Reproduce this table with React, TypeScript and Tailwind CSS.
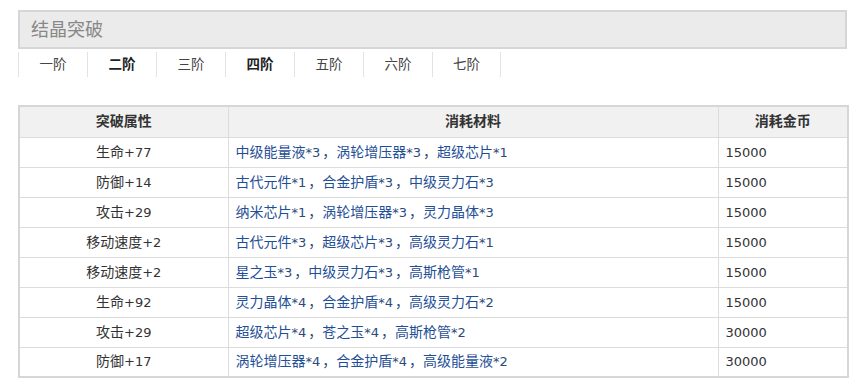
const tabs = [
  { label: "一阶", bold: false },
  { label: "二阶", bold: true },
  { label: "三阶", bold: false },
  { label: "四阶", bold: true },
  { label: "五阶", bold: false },
  { label: "六阶", bold: false },
  { label: "七阶", bold: false },
];

type Item = [string, number];

const rows: Array<{ attr: string; items: Item[]; gold: string }> = [
  { attr: "生命+77", items: [["中级能量液", 3], ["涡轮增压器", 3], ["超级芯片", 1]], gold: "15000" },
  { attr: "防御+14", items: [["古代元件", 1], ["合金护盾", 3], ["中级灵力石", 3]], gold: "15000" },
  { attr: "攻击+29", items: [["纳米芯片", 1], ["涡轮增压器", 3], ["灵力晶体", 3]], gold: "15000" },
  { attr: "移动速度+2", items: [["古代元件", 3], ["超级芯片", 3], ["高级灵力石", 1]], gold: "15000" },
  { attr: "移动速度+2", items: [["星之玉", 3], ["中级灵力石", 3], ["高斯枪管", 1]], gold: "15000" },
  { attr: "生命+92", items: [["灵力晶体", 4], ["合金护盾", 4], ["高级灵力石", 2]], gold: "15000" },
  { attr: "攻击+29", items: [["超级芯片", 4], ["苍之玉", 4], ["高斯枪管", 2]], gold: "30000" },
  { attr: "防御+17", items: [["涡轮增压器", 4], ["合金护盾", 4], ["高级能量液", 2]], gold: "30000" },
];

// latin runs are a touch smaller than the CJK glyphs, like the original page
function Mixed({ text }: { text: string }) {
  const parts = text.split(/([\x00-\x7f]+)/).filter(Boolean);
  return (
    <>
      {parts.map((part, i) =>
        /^[\x00-\x7f]+$/.test(part) ? (
          <span className="text-[13px]" key={i}>
            {part}
          </span>
        ) : (
          <span key={i}>{part}</span>
        ),
      )}
    </>
  );
}

export default function App() {
  return (
    <div
      className="min-h-[388px] bg-white pt-[10px] text-[14px] text-[#333]"
      style={{ fontFamily: '"DejaVu Sans", "Noto Sans CJK SC", sans-serif' }}
    >
      <div className="ml-[18px] w-[829px]">
        <div className="flex h-[39px] items-center border-2 border-[#d6d6d6] bg-[#ebebeb] px-[11px] text-[18px] text-[#888]">
          结晶突破
        </div>

        <div className="mt-[3px] flex text-[13.5px]">
          {tabs.map((tab, i) => (
            <div
              className={`flex h-[25px] w-[69px] items-center justify-center border-l border-[#e3e3e3] ${
                i === tabs.length - 1 ? "border-r" : ""
              } ${tab.bold ? "font-bold text-[#222]" : "text-[#444]"}`}
              key={tab.label}
            >
              {tab.label}
            </div>
          ))}
        </div>

        <table className="mt-[28px] w-[829px] table-fixed border-collapse border-2 border-[#d6d6d6]">
          <colgroup>
            <col className="w-[209px]" />
            <col className="w-[490px]" />
            <col className="w-[130px]" />
          </colgroup>
          <thead>
            <tr className="h-[31px] bg-[#f1f1f1]">
              <th className="border border-[#dcdcdc] font-bold">突破属性</th>
              <th className="border border-[#dcdcdc] font-bold">消耗材料</th>
              <th className="border border-[#dcdcdc] font-bold">消耗金币</th>
            </tr>
          </thead>
          <tbody>
            {rows.map((row, r) => (
              <tr className="h-[30px]" key={r}>
                <td className="border border-[#dcdcdc] text-center">
                  <Mixed text={row.attr} />
                </td>
                <td className="border border-[#dcdcdc] px-[7px]">
                  {row.items.map(([name, count], i) => (
                    <span key={name}>
                      <span className="text-[#1f4f96]">{name}</span>
                      <span className="pr-[2px] text-[13px] text-[#2c4a7a]">*{count}</span>
                      {i < row.items.length - 1 ? <span className="text-[#2c4a7a]">，</span> : null}
                    </span>
                  ))}
                </td>
                <td className="border border-[#dcdcdc] px-[7px]">
                  <Mixed text={row.gold} />
                </td>
              </tr>
            ))}
          </tbody>
        </table>
      </div>
    </div>
  );
}
